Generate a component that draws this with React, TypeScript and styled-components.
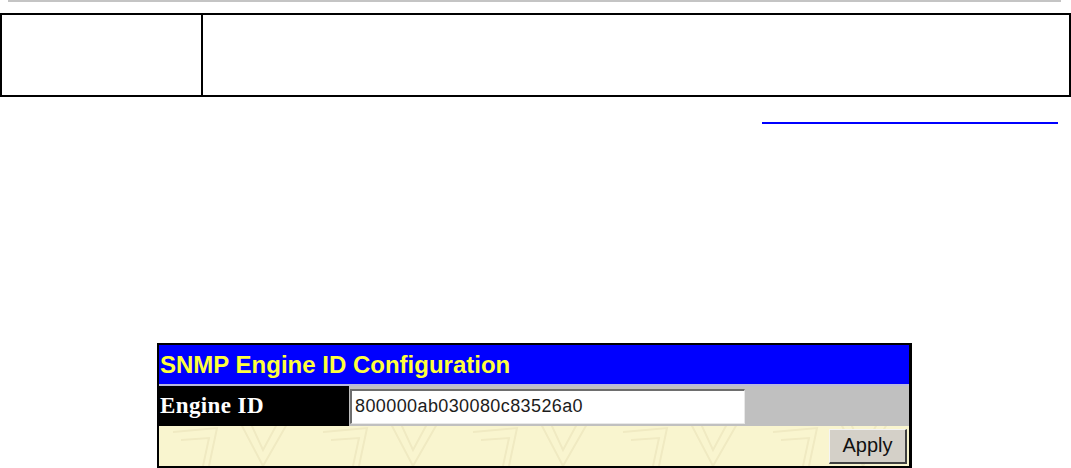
import styled, { createGlobalStyle } from 'styled-components';

const GlobalStyle = createGlobalStyle`
    body {
        margin: 0;
        background: #ffffff;
        font-family: 'Liberation Sans', Arial, sans-serif;
    }
`;

const StyledPage = styled.div`
    width: 1071px;
    height: 468px;
    overflow: hidden;
`;

const StyledTopRule = styled.div`
    margin: 0 10px 0 8px;
    height: 0;
    border-top: 2px solid #c4c4c4;
`;

const StyledDescTable = styled.div`
    margin-top: 11px;
    height: 80px;
    display: grid;
    grid-template-columns: 199px 1fr;
    border: 2px solid #000;
`;

const StyledDescCell = styled.div`
    & + & {
        border-left: 2px solid #000;
    }
`;

const StyledLinkRow = styled.div`
    display: flex;
    justify-content: flex-end;
    padding-right: 13px;
    margin-top: 23px;
`;

const StyledLink = styled.a`
    display: block;
    width: 296px;
    height: 2px;
    border-bottom: 2px solid #0000ff;
`;

const StyledFigure = styled.div`
    width: 750px;
    margin: 219px 0 0 157px;
    border-top: 2px solid #000;
    border-left: 2px solid #000;
    border-bottom: 2px solid #000;
    border-right: 3px solid #000;
    box-shadow: inset -1px 0 0 #d8d8d8;
`;

const StyledTitleBar = styled.div`
    height: 39px;
    background: #0000ff;
    border-bottom: 2px solid #b8b8dc;
    display: flex;
    align-items: center;
    padding-left: 1px;
    color: #ffff3c;
    font-family: 'Liberation Sans', Arial, sans-serif;
    font-weight: bold;
    font-size: 24px;
`;

const StyledRow = styled.div`
    display: grid;
    grid-template-columns: 190px 396px 1fr;
    height: 40px;
`;

const StyledLabelCell = styled.div`
    background: #000;
    color: #ffffff;
    font-family: 'Liberation Serif', 'Times New Roman', serif;
    font-weight: bold;
    font-size: 23px;
    letter-spacing: 0.4px;
    display: flex;
    align-items: center;
    padding-left: 1px;
`;

const StyledFieldCell = styled.div`
    background: #c0c0c0;
    display: flex;
    align-items: center;
    grid-column: span 2;
    padding-left: 1px;
`;

const StyledInput = styled.input`
    box-sizing: border-box;
    width: 395px;
    height: 35px;
    margin: 0;
    padding: 0 3px;
    background: #ffffff;
    border-style: solid;
    border-width: 2px 1px 1px 2px;
    border-color: #6e6e6e #e8e8e8 #e8e8e8 #6e6e6e;
    font-family: 'Liberation Sans', Arial, sans-serif;
    font-size: 18px;
    letter-spacing: 0.4px;
    color: #1c1c1c;
    outline: none;
`;

const StyledFooter = styled.div`
    height: 40px;
    background-color: #f9f5cf;
    background-image: url("data:image/svg+xml,%3Csvg xmlns='http://www.w3.org/2000/svg' width='150' height='40'%3E%3Cg fill='none' stroke='%23f0eac2' stroke-width='2'%3E%3Cpath d='M14 6 L58 2 L50 40 M22 14 L50 12 L44 40'/%3E%3Cpath d='M82 -2 L104 40 L128 -2 M92 -2 L104 24 L118 -2'/%3E%3C/g%3E%3C/svg%3E");
    display: flex;
    justify-content: flex-end;
    align-items: center;
    padding-right: 2px;
`;

const StyledButton = styled.button`
    box-sizing: border-box;
    width: 78px;
    height: 35px;
    margin: 0;
    padding: 0;
    background: #d4d0c8;
    border-style: solid;
    border-width: 1px 2px 2px 1px;
    border-color: #f4f4f4 #404040 #404040 #f4f4f4;
    font-family: 'Liberation Sans', Arial, sans-serif;
    font-size: 20px;
    color: #111;
`;

function App() {
    return (
        <StyledPage>
            <GlobalStyle />
            <StyledTopRule />
            <StyledDescTable>
                <StyledDescCell />
                <StyledDescCell />
            </StyledDescTable>
            <StyledLinkRow>
                <StyledLink href='#' aria-label='link' />
            </StyledLinkRow>
            <StyledFigure>
                <StyledTitleBar>SNMP Engine ID Configuration</StyledTitleBar>
                <StyledRow>
                    <StyledLabelCell>Engine ID</StyledLabelCell>
                    <StyledFieldCell>
                        <StyledInput defaultValue='800000ab030080c83526a0' />
                    </StyledFieldCell>
                </StyledRow>
                <StyledFooter>
                    <StyledButton>Apply</StyledButton>
                </StyledFooter>
            </StyledFigure>
        </StyledPage>
    );
}

export default App;
